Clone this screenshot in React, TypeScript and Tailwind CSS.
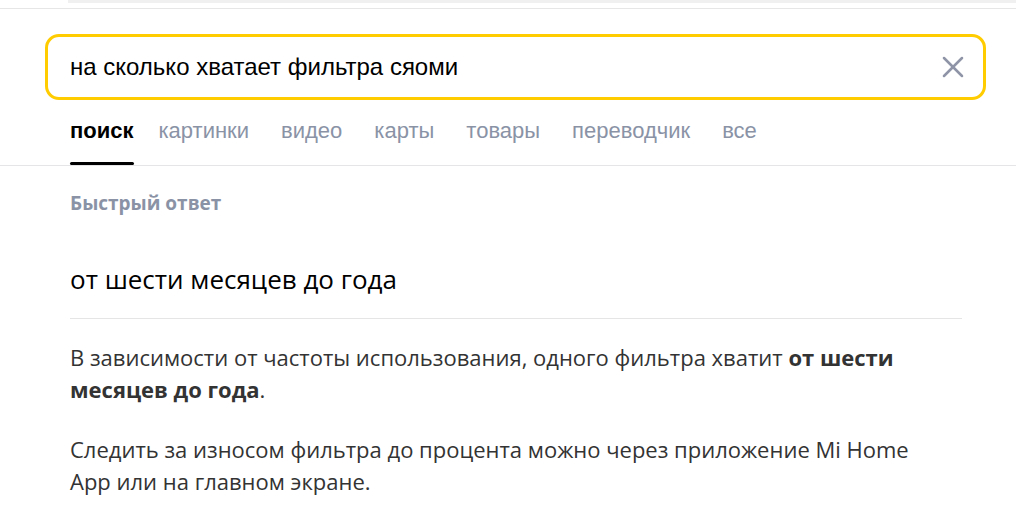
import { X } from "lucide-react";

const tabs = ["картинки", "видео", "карты", "товары", "переводчик", "все"];

export default function App() {
  return (
    <div className="w-[1016px] h-[507px] overflow-hidden bg-white font-['Liberation_Sans',Arial,sans-serif]">
      {/* top remnants */}
      <div className="h-[3px] ml-[68px] bg-[#f0f0f0]" />
      <div className="mt-[5px] h-px bg-[#e6e6e6]" />

      {/* search box */}
      <div className="pl-[45px] pr-[30px] pt-[25px]">
        <div className="flex items-center h-[66px] border-[3px] border-[#ffcc00] rounded-[14px] pl-[22px] pr-[12px]">
          <span className="flex-1 text-[24px] text-black">на сколько хватает фильтра сяоми</span>
          <X size={36} strokeWidth={1.7} className="text-[#8f95a6]" />
        </div>
      </div>

      {/* tabs */}
      <div className="flex items-end pl-[70px] border-b border-[#e5e5e8] h-[66px]">
        <div className="flex flex-col mr-[25px]">
          <span className="text-[22px] font-bold text-black leading-[26px]">поиск</span>
          <div className="mt-[18px] h-[3px] bg-black rounded-sm" />
        </div>
        {tabs.map((t) => (
          <span key={t} className="text-[22px] text-[#8a93a6] leading-[26px] mb-[21px] mr-[32px]">
            {t}
          </span>
        ))}
      </div>

      {/* answer */}
      <div className="pl-[70px] pr-[54px] font-['Open_Sans',sans-serif]">
        <div className="pt-[25px] text-[19px] leading-[24px] font-bold text-[#8a93a6]">Быстрый ответ</div>
        <div className="pt-[48px] text-[26px] leading-[32px] font-medium text-black">от шести месяцев до года</div>
        <div className="mt-[23px] h-px bg-[#e5e5e5]" />
        <p className="mt-[22px] max-w-[870px] text-[22px] leading-[32px] text-[#333]">
          В зависимости от частоты использования, одного фильтра хватит <b className="font-bold">от шести месяцев до года</b>.
        </p>
        <p className="mt-[28px] max-w-[870px] text-[22px] leading-[32px] text-[#333]">
          Следить за износом фильтра до процента можно через приложение Mi Home App или на главном экране.
        </p>
      </div>
    </div>
  );
}
